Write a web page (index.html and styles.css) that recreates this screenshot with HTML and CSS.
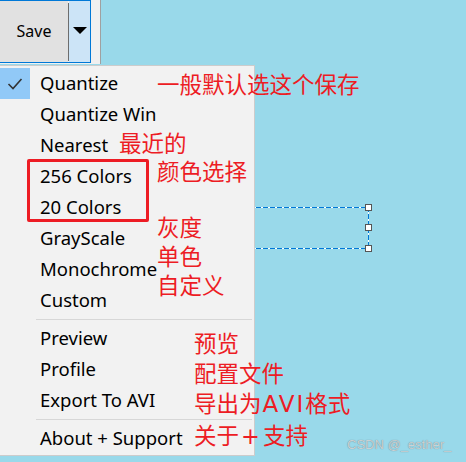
FILE: index.html
```html
<!DOCTYPE html>
<html lang="zh">
<head>
<meta charset="utf-8">
<title>Save menu</title>
<link rel="stylesheet" href="styles.css">
</head>
<body>
<div class="screen">
  <div class="toolbar">
    <div class="split">
      <div class="split-main">Save</div>
      <div class="split-divider"></div>
      <div class="split-arrow">
        <svg width="14" height="7" viewBox="0 0 14 7"><polygon points="0,0 14,0 7,7" fill="#000"/></svg>
      </div>
    </div>
  </div>

  <div class="selection">
    <span class="handle h-top"></span>
    <span class="handle h-mid"></span>
    <span class="handle h-bot"></span>
  </div>

  <div class="menu">
    <div class="item checked">
      <span class="gutter"><svg width="16" height="14" viewBox="0 0 16 14"><polyline points="1.5,7 6,11.5 14.5,2" fill="none" stroke="#333" stroke-width="1.6"/></svg></span>
      <span class="label">Quantize</span>
    </div>
    <div class="item"><span class="gutter"></span><span class="label">Quantize Win</span></div>
    <div class="item"><span class="gutter"></span><span class="label">Nearest</span></div>
    <div class="item"><span class="gutter"></span><span class="label">256 Colors</span></div>
    <div class="item"><span class="gutter"></span><span class="label">20 Colors</span></div>
    <div class="item"><span class="gutter"></span><span class="label">GrayScale</span></div>
    <div class="item"><span class="gutter"></span><span class="label">Monochrome</span></div>
    <div class="item"><span class="gutter"></span><span class="label">Custom</span></div>
    <div class="sep"></div>
    <div class="item"><span class="gutter"></span><span class="label">Preview</span></div>
    <div class="item"><span class="gutter"></span><span class="label">Profile</span></div>
    <div class="item"><span class="gutter"></span><span class="label">Export To AVI</span></div>
    <div class="sep"></div>
    <div class="item"><span class="gutter"></span><span class="label">About + Support</span></div>
  </div>

  <div class="box-mark"></div>

  <div class="note n1">一般默认选这个保存</div>
  <div class="note n2">最近的</div>
  <div class="note n3">颜色选择</div>
  <div class="note n4">灰度<br>单色<br>自定义</div>
  <div class="note n5">预览<br>配置文件<br>导出为<span class="latin">AVI</span>格式<br>关于<span class="plus">+</span>支持</div>

  <div class="watermark">CSDN @_esther_</div>
</div>
</body>
</html>
```

FILE: styles.css
```css
html, body {
  margin: 0;
  padding: 0;
}
body {
  background: #99d9ea;
  font-family: "Noto Sans", "Open Sans", sans-serif;
}
.screen {
  position: relative;
  width: 466px;
  height: 462px;
  overflow: hidden;
  background: #99d9ea;
}

/* toolbar with split button */
.toolbar {
  width: 100px;
  height: 64px;
  background: #f0f0f0;
  border-right: 1px solid #a0a0a0;
}
.split {
  display: flex;
  width: 90px;
  height: 61px;
  border: 1px solid #0078d7;
  border-left: none;
}
.split-main {
  width: 68px;
  background: #e1e1e1;
  display: flex;
  align-items: center;
  justify-content: center;
  font-family: "Noto Sans", sans-serif;
  font-size: 16px;
  color: #000;
  padding-bottom: 2px;
  box-sizing: border-box;
}
.split-divider {
  width: 1px;
  margin: 2px 0 1px;
  background: #6d6d6d;
}
.split-arrow {
  flex: 1;
  background: #cce4f7;
  display: flex;
  align-items: center;
  justify-content: center;
  padding-bottom: 3px;
}
.split-arrow svg { display: block; }

/* dashed selection on canvas */
.selection {
  position: absolute;
  left: 200px;
  top: 207px;
  width: 169px;
  height: 42px;
  box-sizing: border-box;
  background:
    repeating-linear-gradient(90deg, #0078d7 0 5px, #fff 5px 7px) left top / 100% 1px no-repeat,
    repeating-linear-gradient(90deg, #0078d7 0 5px, #fff 5px 7px) left bottom / 100% 1px no-repeat,
    repeating-linear-gradient(180deg, #0078d7 0 5px, #fff 5px 7px) right top / 1px 100% no-repeat;
}
.handle {
  position: absolute;
  right: -3px;
  width: 5px;
  height: 5px;
  background: #fff;
  border: 1px solid #555;
}
.h-top { top: -3px; }
.h-mid { top: 17px; }
.h-bot { bottom: -3px; }

/* popup menu */
.menu {
  position: absolute;
  left: 0;
  top: 65px;
  width: 254px;
  background: #f2f2f2;
  border: 1px solid #cccccc;
  border-left: none;
  padding: 2px 0 1px;
  font-family: "Noto Sans", sans-serif;
  font-size: 18.5px;
  color: #000;
}
.item {
  display: flex;
  align-items: center;
  height: 31px;
}
.gutter {
  width: 30px;
  height: 31px;
  margin-right: 10px;
  display: flex;
  align-items: center;
  justify-content: center;
}
.checked .gutter {
  background: #91c9f7;
}
.label {
  white-space: nowrap;
  line-height: 31px;
  padding-bottom: 3px;
}
.sep {
  height: 1px;
  margin: 3px 2px 3px 36px;
  background: #d7d7d7;
}

/* red annotations */
.box-mark {
  position: absolute;
  left: 27px;
  top: 159px;
  width: 122px;
  height: 63px;
  box-sizing: border-box;
  border: 3px solid #ed1c24;
  border-radius: 2px;
}
.note {
  position: absolute;
  font-family: "Noto Sans CJK SC", "Noto Sans", sans-serif;
  font-size: 22.5px;
  line-height: 30px;
  color: #ed1c24;
  white-space: nowrap;
}
.note .latin {
  font-family: "DejaVu Sans", "Noto Sans CJK SC", sans-serif;
  font-size: 23px;
  letter-spacing: 2px;
  margin-left: 1px;
}
.note .plus {
  font-family: "DejaVu Sans", "Noto Sans CJK SC", sans-serif;
  margin: 0 3px 0 2px;
}
.n1 { left: 157px; top: 68px; }
.n2 { left: 119px; top: 127px; }
.n3 { left: 157px; top: 155px; }
.n4 { left: 157px; top: 212px; line-height: 29px; }
.n5 { left: 194px; top: 327px; }

.watermark {
  position: absolute;
  left: 347px;
  top: 437px;
  font-family: "Liberation Sans", Arial, sans-serif;
  font-size: 13px;
  color: #cad2d5;
  text-shadow: 0 0 1px #6a7d83;
}
```
